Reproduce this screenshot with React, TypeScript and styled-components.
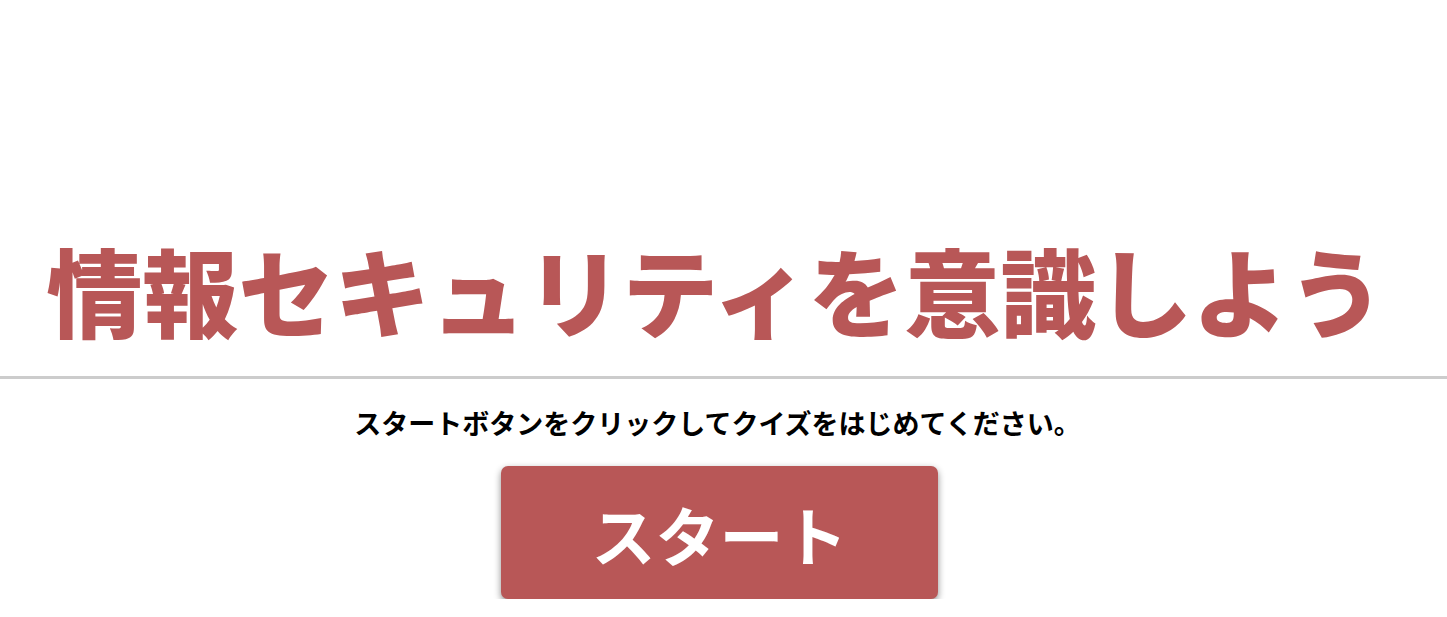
import React from "react";
import styled, { createGlobalStyle } from "styled-components";

const Global = createGlobalStyle`
  html, body { margin: 0; padding: 0; background: #fff; }
  body { font-family: "Noto Sans CJK JP", "Noto Sans", sans-serif; }
`;

const Page = styled.main`
  display: flex;
  flex-direction: column;
  align-items: center;
  padding-right: 12px;
`;

const Title = styled.h1`
  margin: 217px 4px 15px 0;
  font-size: 96px;
  font-weight: 900;
  line-height: 1.5;
  color: #b85757;
  text-align: center;
`;

const Rule = styled.hr`
  align-self: stretch;
  margin: 0 -12px 0 0;
  border: none;
  height: 3px;
  background: #cccccc;
`;

const Lead = styled.p`
  margin: 24px 0 0;
  font-size: 27px;
  font-weight: 700;
  color: #000;
`;

const StartButton = styled.button`
  margin: 24px 0 0 4px;
  width: 437px;
  height: 133px;
  border: none;
  border-radius: 7px;
  background: #b85757;
  color: #fff;
  font-family: "Noto Sans CJK JP", sans-serif;
  font-size: 64px;
  font-weight: 700;
  box-shadow: 0 3px 7px rgba(0, 0, 0, 0.45);
  cursor: pointer;
`;

export default function App() {
  return (
    <>
      <Global />
      <Page>
        <Title>情報セキュリティを意識しよう</Title>
        <Rule />
        <Lead>スタートボタンをクリックしてクイズをはじめてください。</Lead>
        <StartButton>スタート</StartButton>
      </Page>
    </>
  );
}
